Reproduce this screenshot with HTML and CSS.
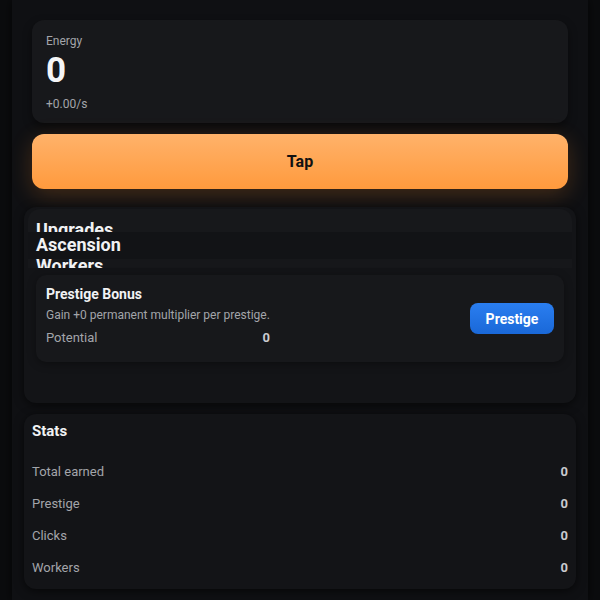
FILE: index.html
```html
<!DOCTYPE html>
<html>
<head>
<meta charset="utf-8">
<link rel="stylesheet" href="styles.css">
</head>
<body>
<div class="app">
  <section class="energy">
    <div class="energy-label">Energy</div>
    <div class="energy-value">0</div>
    <div class="energy-rate">+0.00/s</div>
  </section>
  <button class="tap">Tap</button>

  <section class="tabs">
    <div class="tab-head tab-upgrades"><h2>Upgrades</h2></div>
    <div class="tab-head tab-ascension"><h2>Ascension</h2></div>
    <div class="tab-head tab-workers"><h2>Workers</h2></div>
    <div class="bonus">
      <div class="bonus-info">
        <div class="bonus-title">Prestige Bonus</div>
        <div class="bonus-desc">Gain +0 permanent multiplier per prestige.</div>
        <div class="bonus-row"><span>Potential</span><b>0</b></div>
      </div>
      <button class="prestige">Prestige</button>
    </div>
  </section>

  <section class="stats">
    <h2>Stats</h2>
    <div class="stat"><span>Total earned</span><b>0</b></div>
    <div class="stat"><span>Prestige</span><b>0</b></div>
    <div class="stat"><span>Clicks</span><b>0</b></div>
    <div class="stat"><span>Workers</span><b>0</b></div>
  </section>
</div>
</body>
</html>
```

FILE: styles.css
```css
* { box-sizing: border-box; }
html, body { margin: 0; padding: 0; }
body {
  background: #0b0c0e;
  font-family: Roboto, "Liberation Sans", sans-serif;
  color: #e8e9eb;
  height: 600px;
  overflow: hidden;
}
.app {
  margin: 0 12px;
  padding: 20px 12px 12px;
  background: #0f1013;
  box-shadow: 0 0 10px rgba(0,0,0,0.7);
  min-height: 600px;
  display: flex;
  flex-direction: column;
}
.energy {
  margin: 0 8px;
  height: 103px;
  background: #17181b;
  border-radius: 12px;
  padding: 14px 14px 0;
  box-shadow: 0 4px 10px rgba(0,0,0,0.45);
}
.energy-label { font-size: 12px; color: #a3a5aa; line-height: 14px; }
.energy-value { font-size: 35px; font-weight: 700; color: #f4f5f7; line-height: 38px; margin-top: 4px; }
.energy-rate { font-size: 12px; color: #a3a5aa; line-height: 14px; margin-top: 7px; }
.tap {
  margin: 11px 8px 0;
  height: 55px;
  border: none;
  border-radius: 12px;
  background: linear-gradient(#ffb26a, #ff9a3d);
  color: #111;
  font-family: inherit;
  font-size: 16px;
  font-weight: 700;
  box-shadow: 0 6px 22px rgba(255,140,40,0.22);
}
.tabs {
  margin-top: 18px;
  height: 196px;
  background: #131417;
  border-radius: 12px;
  box-shadow: 0 2px 10px rgba(0,0,0,0.6);
  display: flex;
  flex-direction: column;
  overflow: hidden;
}
.tab-head { overflow: hidden; flex: none; }
.tab-head h2 {
  margin: 0;
  font-size: 18px;
  font-weight: 700;
  line-height: 20px;
  color: #f1f2f4;
  padding-left: 8px;
}
.tab-upgrades {
  height: 23px;
  padding-top: 11px;
  background: #17181b;
  margin: 2px 4px 0;
  border-radius: 12px 12px 0 0;
}
.tab-ascension {
  height: 27px;
  padding-top: 3px;
  background: #121316;
  margin: 0 4px;
}
.tab-workers {
  height: 9px;
  margin: 0 4px;
  background: #16171a;
}
.tab-workers h2 { margin-top: -3px; }
.bonus {
  margin: 7px 12px 0;
  height: 87px;
  background: #17181b;
  border-radius: 10px;
  padding: 11px 10px 0;
  display: flex;
  align-items: flex-start;
  justify-content: space-between;
  box-shadow: 0 2px 8px rgba(0,0,0,0.35);
}
.bonus-info { width: 224px; }
.bonus-title { font-size: 14px; font-weight: 700; color: #f1f2f4; line-height: 16px; }
.bonus-desc { font-size: 12px; color: #a3a5aa; line-height: 14px; margin-top: 6px; white-space: nowrap; }
.bonus-row {
  display: flex; justify-content: space-between;
  font-size: 13px; color: #a3a5aa; line-height: 16px; margin-top: 8px;
}
.bonus-row b { color: #c9cbcf; }
.prestige {
  margin-top: 17px;
  width: 84px;
  height: 31px;
  border: none;
  border-radius: 8px;
  background: linear-gradient(#2a7ef0, #1a68d8);
  color: #fff;
  font-family: inherit;
  font-size: 14px;
  font-weight: 700;
}
.stats {
  margin-top: 11px;
  background: #131417;
  border-radius: 12px;
  padding: 7px 8px 6px;
  box-shadow: 0 2px 10px rgba(0,0,0,0.6);
}
.stats h2 { margin: 0 0 14px; font-size: 15px; font-weight: 700; line-height: 20px; color: #f1f2f4; }
.stat {
  display: flex; justify-content: space-between; align-items: center;
  height: 32px;
  font-size: 13px; color: #a3a5aa;
}
.stat b { color: #c9cbcf; font-size: 13px; }
```
